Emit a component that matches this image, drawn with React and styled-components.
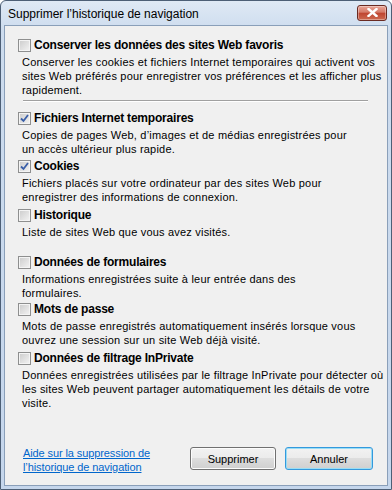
import React from "react";
import styled, { createGlobalStyle } from "styled-components";

const Global = createGlobalStyle`
  html, body { margin: 0; padding: 0; background: #fff; }
  body { font-family: "Liberation Sans", Arial, sans-serif; }
`;

const Window = styled.div`
  width: 392px;
  height: 490px;
  box-sizing: border-box;
  border: 1px solid #4d5f76;
  border-radius: 6px 6px 0 0;
  background: linear-gradient(#dfe9f5, #cddcee 30px, #c5d6ec);
  display: flex;
  flex-direction: column;
  overflow: hidden;
`;

const TitleBar = styled.div`
  height: 24px;
  flex: none;
  display: flex;
  align-items: center;
  justify-content: space-between;
  padding: 0 4px 0 7px;
  box-sizing: border-box;
`;

const Title = styled.div`
  font-family: "Liberation Sans", Arial, sans-serif;
  font-size: 12px;
  color: #000;
  padding-top: 1px;
`;

const CloseButton = styled.div`
  width: 30px;
  height: 16px;
  margin-top: -1px;
  box-sizing: border-box;
  border: 1px solid #6a2a22;
  border-radius: 3px;
  background: linear-gradient(#e9a597, #d57a68 45%, #bf4430 50%, #cc6a50);
  display: flex;
  align-items: center;
  justify-content: center;
  box-shadow: inset 0 0 0 1px rgba(255,255,255,0.35);
`;

const Content = styled.div`
  flex: 1;
  margin: 0 3px 3px 3px;
  border: 1px solid #8a9fb9;
  background: #f0f0f0;
  display: flex;
  flex-direction: column;
  padding: 12px 0 0 0;
  font-size: 11px;
  color: #000;
`;

const Group = styled.div`
  min-height: ${(p) => p.$h || 48}px;
  padding-left: 13px;
  padding-right: 6px;
  box-sizing: border-box;
`;

const LabelRow = styled.label`
  display: flex;
  align-items: center;
  gap: 3px;
  height: 14px;
  font-weight: bold;
  font-size: 12px;
  letter-spacing: -0.2px;
`;

const Box = styled.span`
  width: 13px;
  height: 13px;
  box-sizing: border-box;
  border: 1px solid #8e8f8f;
  background: linear-gradient(135deg, #cbcbcb, #f4f4f4);
  box-shadow: inset 0 0 0 1px #f4f4f4;
  display: flex;
  align-items: center;
  justify-content: center;
  flex: none;
`;

const Desc = styled.div`
  margin-top: 3px;
  padding-left: 4px;
  line-height: 14px;
  letter-spacing: 0.2px;
  white-space: nowrap;
`;

const Separator = styled.div`
  height: 1px;
  background: #a0a0a0;
  border-bottom: 1px solid #fff;
  margin: 1px 19px 9px 18px;
`;

const Spacer = styled.div`
  flex: 1;
`;

const Footer = styled.div`
  display: flex;
  align-items: center;
  padding: 0 14px 11px 18px;
`;

const HelpLink = styled.a`
  color: #0066cc;
  text-decoration: underline;
  line-height: 14px;
  width: 150px;
  letter-spacing: -0.1px;
`;

const Buttons = styled.div`
  margin-left: auto;
  display: flex;
  gap: 9px;
  margin-bottom: 3px;
`;

const Button = styled.button`
  width: ${(p) => p.$w}px;
  height: 23px;
  box-sizing: border-box;
  font-family: "Liberation Sans", Arial, sans-serif;
  font-size: 11px;
  color: #000;
  border: 1px solid ${(p) => (p.$default ? "#3399dd" : "#707070")};
  border-radius: 3px;
  background: linear-gradient(#f2f2f2, #ebebeb 49%, #dddddd 50%, #cfcfcf);
  box-shadow: inset 0 0 0 1px ${(p) => (p.$default ? "#99ddf5" : "#fcfcfc")};
  padding: 0;
`;

const Check = () => (
  <svg width="9" height="9" viewBox="0 0 9 9">
    <path d="M1 4.5 L3.5 7 L8 1" fill="none" stroke="#3a5fa8" strokeWidth="1.8" />
  </svg>
);

const CheckBox = ({ checked }) => <Box>{checked && <Check />}</Box>;

const items = [
  {
    label: "Fichiers Internet temporaires",
    checked: true,
    h: 48,
    desc: ["Copies de pages Web, d’images et de médias enregistrées pour", "un accès ultérieur plus rapide."],
  },
  {
    label: "Cookies",
    checked: true,
    h: 49,
    desc: ["Fichiers placés sur votre ordinateur par des sites Web pour", "enregistrer des informations de connexion."],
  },
  { label: "Historique", checked: false, h: 47, desc: ["Liste de sites Web que vous avez visités."] },
  {
    label: "Données de formulaires",
    checked: false,
    h: 47,
    desc: ["Informations enregistrées suite à leur entrée dans des", "formulaires."],
  },
  {
    label: "Mots de passe",
    checked: false,
    h: 49,
    desc: ["Mots de passe enregistrés automatiquement insérés lorsque vous", "ouvrez une session sur un site Web déjà visité."],
  },
  {
    label: "Données de filtrage InPrivate",
    checked: false,
    h: 48,
    desc: [
      "Données enregistrées utilisées par le filtrage InPrivate pour détecter où",
      "les sites Web peuvent partager automatiquement les détails de votre",
      "visite.",
    ],
  },
];

export default function App() {
  return (
    <>
      <Global />
      <Window>
        <TitleBar>
          <Title>Supprimer l’historique de navigation</Title>
          <CloseButton>
            <svg width="11" height="9" viewBox="0 0 11 9">
              <path d="M1.5 1 L9.5 8 M9.5 1 L1.5 8" stroke="#fff" strokeWidth="2.4" strokeLinecap="square" />
            </svg>
          </CloseButton>
        </TitleBar>
        <Content>
          <Group $h={61}>
            <LabelRow>
              <CheckBox />
              Conserver les données des sites Web favoris
            </LabelRow>
            <Desc>
              Conserver les cookies et fichiers Internet temporaires qui activent vos
              <br />
              sites Web préférés pour enregistrer vos préférences et les afficher plus
              <br />
              rapidement.
            </Desc>
          </Group>
          <Separator />
          {items.map((it, i) => (
            <Group key={i} $h={it.h}>
              <LabelRow>
                <CheckBox checked={it.checked} />
                {it.label}
              </LabelRow>
              <Desc>
                {it.desc.map((d, j) => (
                  <div key={j}>{d}</div>
                ))}
              </Desc>
            </Group>
          ))}
          <Spacer />
          <Footer>
            <HelpLink href="#">
              Aide sur la suppression de
              <br />
              l’historique de navigation
            </HelpLink>
            <Buttons>
              <Button $w={86}>Supprimer</Button>
              <Button $w={88} $default>
                Annuler
              </Button>
            </Buttons>
          </Footer>
        </Content>
      </Window>
    </>
  );
}
